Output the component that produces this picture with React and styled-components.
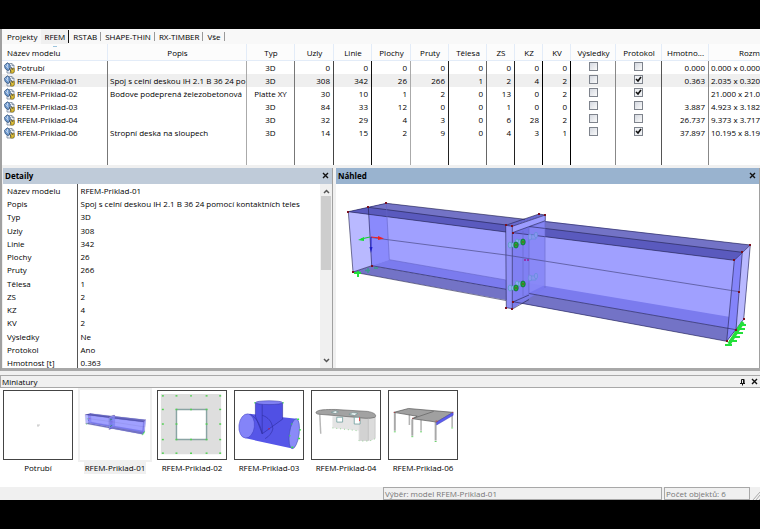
import React, { useState } from "react";
import styled, { createGlobalStyle } from "styled-components";

const GlobalStyle = createGlobalStyle`
	* {
		box-sizing: border-box;
	}
	body {
		margin: 0;
		background: #000;
		color: #000;
		font: 8px/13px "Open Sans", "Noto Sans", sans-serif;
	}
	button {
		font: inherit;
		color: inherit;
		border: 0;
		padding: 0;
		background: none;
	}
`;

const Page = styled.div`
	display: flex;
	flex-direction: column;
	min-height: 100vh;
	padding: 29px 0;
	background: #000;
`;

const Window = styled.main`
	flex: 1;
	display: flex;
	flex-direction: column;
	min-height: 0;
	background: #f0f0f0;
	overflow: hidden;
`;

const Workspace = styled.div`
	flex: 1;
	display: flex;
	flex-direction: column;
	border-left: 2px solid #a0a0a0;
	border-bottom: 3px solid #a8a8a8;
`;

/* ---- tabs ---- */

const TabBar = styled.nav`
	display: flex;
	align-items: center;
	height: 15px;
	background: #f8f8f8;
`;

const Tab = styled.button`
	height: 15px;
	line-height: 15px;
	padding: 0 3px;
	background: ${(p) => (p.$active ? "#f0f0f0" : "transparent")};

	&:first-child {
		padding: 0 4px 0 5px;
	}
`;

const TabLine = styled.span`
	width: 1px;
	height: ${(p) => (p.$strong ? 13 : 9)}px;
	margin-right: 1px;
	background: ${(p) => (p.$strong ? "#111" : "#999")};
`;

/* ---- model list ---- */

const List = styled.div`
	display: flex;
	height: 121px;
	overflow: hidden;
	background: #fff;
`;

const ModelTable = styled.table`
	width: 100%;
	height: 100%;
	table-layout: fixed;
	border-collapse: separate;
	border-spacing: 0;
`;

const Col = styled.col`
	width: ${(p) => (p.$width ? `${p.$width}px` : "auto")};
`;

const HeadCell = styled.th`
	height: 17px;
	padding: 0 4px 0 5px;
	font-weight: 400;
	text-align: ${(p) => p.$align || "center"};
	white-space: nowrap;
	overflow: hidden;
	background: #fcfcfc;
	border-right: 1px solid #e3ecf8;
	border-bottom: 1px solid #e3ecf8;
	background-image: ${(p) =>
		p.$sorted ? "linear-gradient(#9cc4dc, #9cc4dc)" : "none"};
	background-size: 4px 1px;
	background-position: 51px 2px;
	background-repeat: no-repeat;

	&:last-child {
		padding-right: 0;
		border-right: 0;
	}
`;

const Row = styled.tr`
	height: ${(p) => (p.$filler ? "auto" : "13px")};
	background: ${(p) => (p.$selected ? "#efefef" : "#fff")};
`;

const Cell = styled.td`
	padding: 0 3px;
	line-height: 13px;
	text-align: ${(p) => p.$align || "right"};
	white-space: nowrap;
	overflow: hidden;
	border-right: ${(p) => (p.$line ? `1px solid ${p.$line}` : "0")};

	&:first-child {
		padding: 0 2px;
	}
	&:nth-child(2) {
		padding: 0 0 0 2px;
	}
	&:last-child {
		padding: 0 0 0 2px;
	}
`;

const NameBox = styled.div`
	display: flex;
	align-items: center;
	gap: 2px;
`;

const Check = styled.input`
	appearance: none;
	display: block;
	width: 9px;
	height: 9px;
	margin: 0 auto 2px;
	border: 1px solid #7e838c;
	background: linear-gradient(135deg, #d4d8e0, #fafafa);

	&:checked {
		background:
			url("data:image/svg+xml,%3Csvg xmlns='http://www.w3.org/2000/svg' viewBox='0 0 7 7'%3E%3Cpath d='M1 3l2 2 3-4' fill='none' stroke='%23111' stroke-width='1.6'/%3E%3C/svg%3E"),
			#eef0f3;
	}
`;

/* ---- docked panels ---- */

const Docks = styled.div`
	flex: 1 1 0;
	display: grid;
	grid-template-columns: 331px minmax(0, 1fr);
	min-height: 0;
	padding-top: 3px;
`;

const Panel = styled.section`
	display: flex;
	flex-direction: column;
	min-width: 0;
	min-height: 0;
	margin-left: ${(p) => p.$indent}px;
	border-right: 1px solid #a0a0a0;
	background: #fff;
`;

const PanelTitle = styled.header`
	display: flex;
	align-items: center;
	justify-content: space-between;
	height: 16px;
	padding: 0 3px 1px 2px;
	background: ${(p) => p.$tone};

	h2 {
		margin: 0;
		font-size: 8px;
		font-weight: 700;
	}
`;

const IconButton = styled.button`
	display: grid;
	place-items: center;
	width: 7px;
	height: 9px;
`;

const DetailBody = styled.div`
	flex: 1 1 0;
	display: flex;
	min-height: 0;
	overflow: hidden;
`;

const DetailTable = styled.table`
	flex: 1;
	align-self: flex-start;
	border-collapse: collapse;

	tr {
		height: 13px;
	}
	tr:nth-child(4n) {
		height: 14px;
	}
	th {
		width: 74px;
		padding: 0 0 0 4px;
		font-weight: 400;
		text-align: left;
		border-right: 1px solid #555;
	}
	td {
		padding: 0 0 0 3px;
		white-space: nowrap;
	}
`;

const ScrollBar = styled.div`
	display: flex;
	flex-direction: column;
	align-items: center;
	width: 12px;
	padding: 3px 0;
	background: #f0f0f0;
`;

const ScrollThumb = styled.div`
	width: 10px;
	height: 74px;
	margin-bottom: auto;
	background: #cdcdcd;
`;

const Canvas = styled.svg`
	flex: 1 1 0;
	display: block;
	width: 100%;
	min-height: 0;
`;

/* ---- thumbnails ---- */

const StripTitle = styled.header`
	display: flex;
	align-items: center;
	gap: 5px;
	height: 13px;
	margin-top: 4px;
	padding: 0 2px 0 1px;
	border: 1px solid #a8a8a8;
	border-right: 0;

	h2 {
		flex: 1;
		margin: 0;
		font-size: 8px;
		font-weight: 400;
	}
`;

const Strip = styled.div`
	display: flex;
	gap: 7px;
	height: 99px;
	padding: 2px 3px;
	background: #fff;
`;

const Thumb = styled.button`
	display: flex;
	flex-direction: column;
	align-items: center;
	gap: 2px;
	width: 70px;

	svg {
		display: block;
		width: 70px;
		height: 70px;
		border: 1px solid ${(p) => (p.$selected ? "#fff" : "#444")};
		box-shadow: ${(p) => (p.$selected ? "0 0 0 2px #f0f0f0" : "none")};
	}
	span {
		padding: 0 1px;
		line-height: 12px;
		white-space: nowrap;
		background: ${(p) => (p.$selected ? "#f0f0f0" : "transparent")};
	}
`;

const StatusBar = styled.footer`
	display: flex;
	justify-content: flex-end;
	gap: 2px;
	height: 13px;
	color: #777;
`;

const StatusField = styled.div`
	width: ${(p) => p.$width}px;
	padding: 0 1px;
	line-height: 11px;
	border: 1px solid #a8a8a8;
`;

const Grip = styled.svg`
	width: 8px;
	height: 13px;
`;

const columns = [
	{ label: "Název modelu", width: 106, line: "#777", align: "left" },
	{ label: "Popis", width: 139, line: "#aaa", align: "left" },
	{ label: "Typ", width: 48, line: "#777", align: "center" },
	{ label: "Uzly", width: 39, line: "#444" },
	{ label: "Linie", width: 38, line: "#111" },
	{ label: "Plochy", width: 39, line: "#aaa" },
	{ label: "Pruty", width: 38, line: "#222" },
	{ label: "Tělesa", width: 38, line: "#666" },
	{ label: "ZS", width: 28, line: "#222" },
	{ label: "KZ", width: 28, line: "#000" },
	{ label: "KV", width: 28, line: "#000" },
	{ label: "Výsledky", width: 45, line: "#888", align: "center" },
	{ label: "Protokol", width: 46, line: "#555", align: "center" },
	{ label: "Hmotno...", width: 47, line: "#888" },
	{ label: "Rozm", align: "left" },
];

const models = [
	["Potrubí", "", "3D", 0, 0, 0, 0, 0, 0, 0, 0, false, false, "0.000", "0.000 x 0.000"],
	["RFEM-Priklad-01", "Spoj s celní deskou IH 2.1 B 36 24 po", "3D", 308, 342, 26, 266, 1, 2, 4, 2, false, true, "0.363", "2.035 x 0.320"],
	["RFEM-Priklad-02", "Bodove podeprená železobetonová", "Platte XY", 30, 10, 1, 2, 0, 13, 0, 2, false, true, "", "21.000 x 21.0"],
	["RFEM-Priklad-03", "", "3D", 84, 33, 12, 0, 0, 1, 0, 0, false, false, "3.887", "4.923 x 3.182"],
	["RFEM-Priklad-04", "", "3D", 32, 29, 4, 3, 0, 6, 28, 2, false, false, "26.737", "9.373 x 3.717"],
	["RFEM-Priklad-06", "Stropní deska na sloupech", "3D", 14, 15, 2, 9, 0, 4, 3, 1, false, true, "37.897", "10.195 x 8.19"],
];

const details = [
	["Název modelu", "RFEM-Priklad-01"],
	["Popis", "Spoj s celní deskou IH 2.1 B 36 24 pomocí kontaktních teles"],
	["Typ", "3D"],
	["Uzly", "308"],
	["Linie", "342"],
	["Plochy", "26"],
	["Pruty", "266"],
	["Tělesa", "1"],
	["ZS", "2"],
	["KZ", "4"],
	["KV", "2"],
	["Výsledky", "Ne"],
	["Protokol", "Ano"],
	["Hmotnost [t]", "0.363"],
];

function ModelIcon() {
	return (
		<svg width="11" height="12" viewBox="0 0 11 12">
			<path d="M3 1.5h5l2 2V11H3z" fill="#eef2f8" stroke="#76869a" strokeWidth=".8" />
			<path d="M8 1.5v2h2" fill="none" stroke="#76869a" strokeWidth=".8" />
			<path d="M.5 3.2 3.4.8l2.8 2.4v3.2L4.2 8.8 1 6.4z" fill="#6f9ad0" stroke="#34557f" strokeWidth=".8" />
			<path d="M1.6 3.4 4.8 6.6M3.6 2v2.6" stroke="#e2edf9" strokeWidth=".8" />
			<path d="M7.4 6.4h2.8v3.4L8.8 11H6.6V8.2z" fill="#dfc038" stroke="#8d7412" strokeWidth=".8" />
			<path d="M5.2 6 7 9.8M7 5l2 3" stroke="#3c4656" strokeWidth=".8" />
		</svg>
	);
}

function CloseIcon() {
	return (
		<svg width="7" height="7" viewBox="0 0 7 7">
			<path d="M1 1l5 5M6 1 1 6" stroke="#111" strokeWidth="1.4" />
		</svg>
	);
}

function PinIcon() {
	return (
		<svg width="7" height="8" viewBox="0 0 7 8">
			<path d="M2.5 5V1.5h2.5V5M1 5.5h5M3.5 5v2.5" fill="none" stroke="#111" />
			<path d="M4.6 1v4" stroke="#111" strokeWidth="1.2" />
		</svg>
	);
}

function Chevron({ down }) {
	return (
		<svg width="7" height="5" viewBox="0 0 7 5">
			<path d={down ? "M1 1l2.5 2.5L6 1" : "M1 4l2.5-2.5L6 4"} fill="none" stroke="#555" strokeWidth="1.5" />
		</svg>
	);
}

function Bolt({ x, y }) {
	return (
		<g>
			<path d={`M${x - 5} ${y - 2}h4v4h-4`} fill="#8cb0ee" stroke="#4a90b4" strokeWidth=".6" />
			<ellipse cx={x - 6} cy={y} rx="1.8" ry="3" fill="#8ca8f4" stroke="#4aa0b4" strokeWidth=".6" />
			<ellipse cx={x} cy={y} rx="2.2" ry="3" fill="#1fae38" stroke="#0b6a34" strokeWidth=".8" />
			<circle cx={x} cy={y} r=".8" fill="#903018" />
		</g>
	);
}

function Nut({ x, y }) {
	return (
		<g fill="#8894f0" stroke="#5f8fd6" strokeWidth=".6">
			<path d={`M${x} ${y - 2}h6v4h-6z`} />
			<ellipse cx={x} cy={y} rx="1.8" ry="3" />
			<ellipse cx={x + 6} cy={y - 2} rx="1.6" ry="2.8" />
		</g>
	);
}

const nodes = [
	[348, 212], [368, 207], [386, 203], [353, 272], [372, 266],
	[506, 225], [512, 226], [545, 215], [539, 214], [506, 308], [512, 309],
	[513, 233], [513, 302], [750, 245], [742, 252], [734, 260],
	[739, 292], [744, 319], [736, 330], [727, 341],
];

// Beam joint with an end plate, drawn in preview coordinates
function Beam() {
	return (
		<g>
			{/* left member */}
			<path d="M348.3 211.7 386.3 203.3 389.3 259.7 353 272z" fill="#b9b9ff" />
			<path d="M368.3 207.3 386.3 203.3 512 219 512 290 371.7 265.7z" fill="#a0a0ff" />
			<path d="M368.3 207.3 386.3 203.3 389.3 259.7 371.7 265.7z" fill="#8a8afc" />
			<path d="M389.3 259.7 512 281V291L371.7 265.7z" fill="#7b7bee" />
			<path d="M353 272 371.7 265.7 512 290.5V301z" fill="#7373c6" />
			<path d="M348.3 211.7 386.3 203.3 525 219.3 506 232z" fill="#7373c6" />
			<path d="M348.3 211.7 368.3 207.3 513 225.5 506 232z" fill="#5a5abe" />
			{/* right member */}
			<path d="M512 232 545 221 750.3 245 743.7 319.3 726.7 341.3 512 301.7z" fill="#a0a0ff" />
			<path d="M528 283 743.7 319.3 736 329.7 528 293.5z" fill="#7b7bee" />
			<path d="M528 293.5 736 329.7 726.7 341.3 513 301.7z" fill="#7373c6" />
			<path d="M545 221.5 750.3 245 734.3 260.3 513 232.7z" fill="#7373c6" />
			<path d="M529 226.5 742.3 252.3 734.3 260.3 513 232.7z" fill="#5a5abe" />
			<path d="M742.3 252.3 750.3 245 743.7 319.3 736 329.7z" fill="#b9b9ff" />
			<path d="M734.3 260.3 742.3 252.3 736 329.7 726.7 341.3z" fill="#8484fa" />
			{/* end plates */}
			<path d="M512.3 226.3 545.3 215 544.3 289 512.3 308.7z" fill="#7878f0" fillOpacity=".8" />
			<path d="M529 228 545 222V285L529 293z" fill="#9090fa" fillOpacity=".6" />
			<path d="M505.7 225.3 539 214 545.3 215 512.3 226.3z" fill="#6a6ad0" />
			<path d="M512.3 226.3 545.3 215V220.7L512.3 232.7z" fill="#9c9cff" />
			<path d="M505.7 225.3 512.3 226.3V308.7L506.3 307.7z" fill="#9090f6" />
			<path d="M512.3 301 544 288 512.3 308.7z" fill="#7c7cea" />
			<g fill="none" stroke="#20204c" strokeWidth=".6">
				<path d="M525 219.3 386.3 203.3 348.3 211.7 353 272 506 300.5M348.3 211.7 506 232M368.3 207.3 506 225" />
				<path d="M368.3 207.3 371.7 265.7M353 272 371.7 265.7 506 289.3" />
				<path d="M545 221.5 750.3 245 743.7 319.3 726.7 341.3 513 301.7M750.3 245 734.3 260.3 726.7 341.3M734.3 260.3 513 232.7M742.3 252.3 529 226.5M742.3 252.3 736 329.7 529 293.5" />
				<path d="M505.7 225.3 512.3 226.3V308.7L506.3 307.7zM505.7 225.3 539 214 545.3 215 512.3 226.3M512.3 232.7 545.3 220.7V215M513 308.7 529 299.5" />
				<path d="M513 302 529 295" />
			</g>
			<path d="M371 237.5 506 255 739 291.7" fill="none" stroke="#4b4b86" strokeWidth=".7" />
			<path d="M386.3 203.3 389.3 259.7 506 280M523 231V296M529 226V294M545 221V288" fill="none" stroke="#6464c8" strokeWidth=".6" />
			<Nut x={530} y={237} />
			<Nut x={530} y={278} />
			<Bolt x={523} y={242} />
			<Bolt x={516} y={245} />
			<Bolt x={523} y={284} />
			<Bolt x={516} y={288} />
			<path d="M524 260h5" stroke="#9c1a9c" strokeWidth="1.5" strokeDasharray="2 1" />
			{/* supports */}
			<g fill="none" stroke="#22e03a" strokeWidth="2">
				<path d="M354 273h7M358 271v6" />
				<path d="M725 345h7M729 341h8M732 337h8M735 333h8M738 329h7M741 325h5" />
				<path d="M729 344l14-22" strokeWidth="3.5" />
			</g>
			<path d="M365 270.5h5M368 268v5M374 268h4" fill="none" stroke="#3b9c8c" strokeWidth="1.5" />
			{/* local axes */}
			<path d="M370 237l-9 2" stroke="#14c832" />
			<path d="M364 237l-6 3 6 1z" fill="#14e032" />
			<path d="M371 237l9 1" stroke="#f02020" />
			<path d="M378 236l6 2.5-6 1.5z" fill="#f02020" />
			<path d="M371 237v12" stroke="#2020c8" />
			<path d="M369.5 247h3l-1.5 6z" fill="#2020c8" />
			{nodes.map(([x, y]) => (
				<rect key={`${x}-${y}`} x={x - 1} y={y - 1} width="2" height="2" fill="#7c1020" />
			))}
		</g>
	);
}

function PipeThumb() {
	return (
		<svg viewBox="0 0 70 70">
			<path d="M34 35h3M35 35v2" stroke="#b8b8b8" strokeWidth=".8" />
		</svg>
	);
}

function BeamThumb() {
	return (
		<svg viewBox="321 54 451 451">
			<Beam />
		</svg>
	);
}

const pinRows = [5, 19, 34, 50, 64];

function SlabThumb() {
	return (
		<svg viewBox="0 0 70 70">
			<path d="M3 3h62v62H3z" fill="#dedede" />
			<path d="M19 19h31v31H19z" fill="#fff" stroke="#8aa4a4" strokeWidth="1.5" />
			{pinRows.map((x) =>
				pinRows
					.filter((y) => !(x === 34 && y === 34))
					.map((y) => (
						<path key={`${x}-${y}`} d={`M${x - 1} ${y}h2`} stroke="#52d052" strokeWidth="1.5" />
					))
			)}
		</svg>
	);
}

function TeeThumb() {
	return (
		<svg viewBox="0 0 70 70">
			<path d="M14 23.5 63.5 28.5 59 59.2 10 48.5z" fill="#5656e8" />
			<path d="M21 12v14l8 18 20-15V12z" fill="#5050e4" />
			<ellipse cx="35" cy="12" rx="14" ry="2" fill="#8080f2" stroke="#3030a0" strokeWidth=".5" />
			<ellipse cx="12" cy="36" rx="8" ry="12.5" fill="#8484f8" stroke="#4040c0" strokeWidth=".5" transform="rotate(6 12 36)" />
			<ellipse cx="61" cy="44" rx="5" ry="15.5" fill="#8a8af8" stroke="#3c50b0" strokeWidth=".6" transform="rotate(8 61 44)" />
			<path d="M21 12v14l7 18 21-15V12M28 14v30M16 24c6 4 10 10 12 20M28 25c6 2 10 6 11 14-1 4-4 8-8 10" fill="none" stroke="#2c2c9c" strokeWidth=".6" />
			<path d="M20 12h1M49 12h1M64 29h2M66 40h2M65 49h2M58 58h2M58 34h1M56 46h1" stroke="#38e048" strokeWidth="1.5" />
			<path d="M34 39h2" stroke="#b02060" />
		</svg>
	);
}

function HallThumb() {
	return (
		<svg viewBox="0 0 70 70">
			<path d="M21 26H50V41L21 38z" fill="#e4e4e4" />
			<path d="M48 27 65 25V49C61 52 53 52 48 51z" fill="#dcdcdc" />
			<path d="M49 28h9v23h-9z" fill="#d2d2d2" />
			<path d="M8 24l1 20" stroke="#b8b8b8" strokeWidth="1.5" />
			<path d="M4 22C6 19 14 19 24 19L57 21C63 22 67 24 65 27 60 29 52 28 44 27L8 24C5 24 4 23 4 22z" fill="#a2a2a2" stroke="#555" strokeWidth=".6" />
			<path d="M20 22l4-1.5 3 1-3 1.5zM38 24l4-1.5 5 .5-3 2z" fill="#fff" stroke="#588" strokeWidth=".5" />
			<path d="M25.5 27h6v5h-6zM43.5 27h6v7h-6z" fill="#fff" stroke="#6a9a9a" strokeWidth=".8" />
			<path d="M49 27v4" stroke="#e04040" />
			<path d="M21 38 48 41M48 51c5 1 13 1 17-2" fill="none" stroke="#7cc87c" strokeWidth=".8" strokeDasharray="1 3" />
			<path d="M58 28v23M65 26v23" stroke="#b0b0b0" strokeWidth=".5" />
		</svg>
	);
}

function SlabOnColumnsThumb() {
	return (
		<svg viewBox="0 0 70 70">
			<g stroke="#b4b4b4" strokeWidth="1.6">
				<path d="M21 21v14M33 29v12M65 24v13" />
				<path d="M6 22v19M24 29v17M48 32v19" stroke="#a8a8a8" strokeWidth="2" />
			</g>
			<path d="M5 22 20 18 66 22 49 32 24 28.5 29 26z" fill="#a0a0a0" stroke="#555" strokeWidth=".7" />
			<path d="M24 28.5 46 21" stroke="#555" strokeWidth=".6" />
			<path d="M66 22V25L49 35V32z" fill="#5c5cf0" stroke="#3c3cb0" strokeWidth=".5" />
			<path d="M5 42h2M23 47h2M47 52h2M32 42h2M64 38h2" stroke="#6ad06a" />
			<path d="M5 22h1M24 28h1M48 31h2M65 22h1" stroke="#c04040" />
		</svg>
	);
}

const thumbs = [
	{ name: "Potrubí", Drawing: PipeThumb },
	{ name: "RFEM-Priklad-01", Drawing: BeamThumb },
	{ name: "RFEM-Priklad-02", Drawing: SlabThumb },
	{ name: "RFEM-Priklad-03", Drawing: TeeThumb },
	{ name: "RFEM-Priklad-04", Drawing: HallThumb },
	{ name: "RFEM-Priklad-06", Drawing: SlabOnColumnsThumb },
];

const tabs = ["RFEM", "RSTAB", "SHAPE-THIN", "RX-TIMBER", "Vše"];

function renderValue(value, index, model) {
	if (index === 0) {
		return (
			<NameBox>
				<ModelIcon />
				{value}
			</NameBox>
		);
	}
	if (typeof value === "boolean") {
		return <Check type="checkbox" defaultChecked={value} aria-label={`${columns[index].label} ${model}`} />;
	}
	return value;
}

function App() {
	const [tab, setTab] = useState("RFEM");
	const [selected, setSelected] = useState("RFEM-Priklad-01");

	return (
		<Page>
			<GlobalStyle />
			<Window>
				<Workspace>
					<TabBar>
						<Tab>Projekty</Tab>
						{tabs.map((name) => (
							<React.Fragment key={name}>
								<Tab $active={tab === name} onClick={() => setTab(name)}>
									{name}
								</Tab>
								<TabLine $strong={tab === name} />
							</React.Fragment>
						))}
					</TabBar>
					<List>
						<ModelTable>
							<colgroup>
								{columns.map((c) => (
									<Col key={c.label} $width={c.width} />
								))}
							</colgroup>
							<thead>
								<tr>
									{columns.map((c, i) => (
										<HeadCell
											key={c.label}
											$sorted={i === 0}
											$align={i === 0 ? "left" : i === columns.length - 1 ? "right" : "center"}
										>
											{c.label}
										</HeadCell>
									))}
								</tr>
							</thead>
							<tbody>
								{models.map((m) => (
									<Row key={m[0]} $selected={m[0] === selected} onClick={() => setSelected(m[0])}>
										{m.map((value, i) => (
											<Cell key={columns[i].label} $align={columns[i].align} $line={columns[i].line}>
												{renderValue(value, i, m[0])}
											</Cell>
										))}
									</Row>
								))}
								<Row $filler>
									{columns.map((c) => (
										<Cell key={c.label} $line={c.line} />
									))}
								</Row>
							</tbody>
						</ModelTable>
					</List>
					<Docks>
						<Panel $indent={1}>
							<PanelTitle $tone="#bfcbd9">
								<h2>Detaily</h2>
								<IconButton aria-label="Zavřít detaily">
									<CloseIcon />
								</IconButton>
							</PanelTitle>
							<DetailBody>
								<DetailTable>
									<tbody>
										{details.map(([label, value]) => (
											<tr key={label}>
												<th scope="row">{label}</th>
												<td>{value}</td>
											</tr>
										))}
									</tbody>
								</DetailTable>
								<ScrollBar>
									<IconButton aria-label="Nahoru">
										<Chevron />
									</IconButton>
									<ScrollThumb />
									<IconButton aria-label="Dolů">
										<Chevron down />
									</IconButton>
								</ScrollBar>
							</DetailBody>
						</Panel>
						<Panel $indent={3}>
							<PanelTitle $tone="#99b3cf">
								<h2>Náhled</h2>
								<IconButton aria-label="Zavřít náhled">
									<CloseIcon />
								</IconButton>
							</PanelTitle>
							<Canvas viewBox="336 184 423 184">
								<Beam />
							</Canvas>
						</Panel>
					</Docks>
				</Workspace>
				<StripTitle>
					<h2>Miniatury</h2>
					<IconButton aria-label="Připnout">
						<PinIcon />
					</IconButton>
					<IconButton aria-label="Zavřít miniatury">
						<CloseIcon />
					</IconButton>
				</StripTitle>
				<Strip>
					{thumbs.map(({ name, Drawing }) => (
						<Thumb key={name} $selected={name === selected} onClick={() => setSelected(name)}>
							<Drawing />
							<span>{name}</span>
						</Thumb>
					))}
				</Strip>
				<StatusBar>
					<StatusField $width={279}>Výběr: model {selected}</StatusField>
					<StatusField $width={86}>Počet objektů: 6</StatusField>
					<Grip viewBox="0 0 8 13">
						<path d="M1 13l7-8M4 13l4-5M7 13l1-1" stroke="#aaa" />
					</Grip>
				</StatusBar>
			</Window>
		</Page>
	);
}

export default App;
